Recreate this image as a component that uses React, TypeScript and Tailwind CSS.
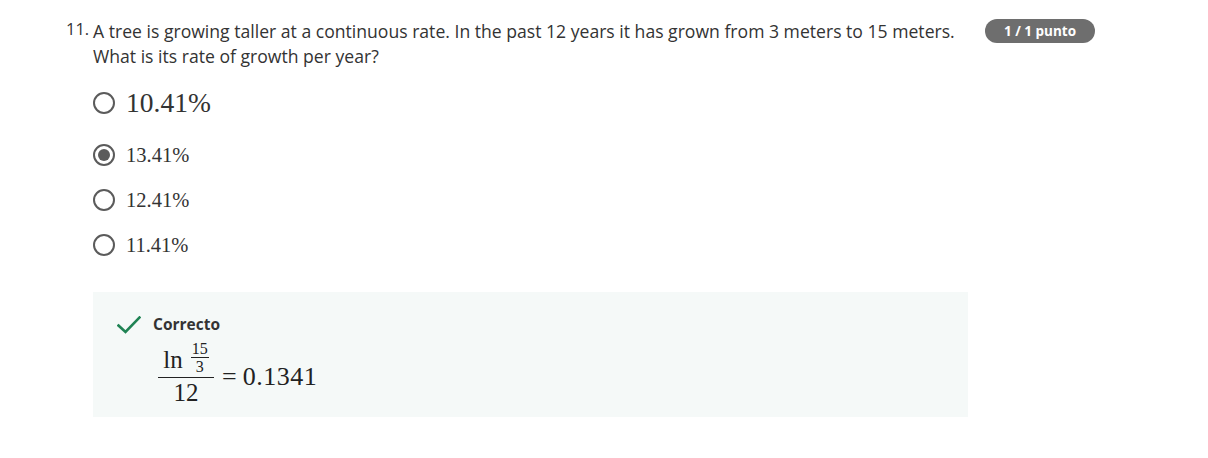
import React from "react";

const sans = { fontFamily: '"Open Sans", "Noto Sans", sans-serif' };
const serif = { fontFamily: '"Liberation Serif", "DejaVu Serif", serif' };

const options = [
  { label: "10.41%", big: true, checked: false },
  { label: "13.41%", big: false, checked: true },
  { label: "12.41%", big: false, checked: false },
  { label: "11.41%", big: false, checked: false },
];

function Radio({ checked }: { checked: boolean }) {
  return (
    <span className="flex h-[22px] w-[22px] shrink-0 items-center justify-center rounded-full border-2 border-[#5b5b5b] bg-white">
      {checked && <span className="h-[12px] w-[12px] rounded-full bg-[#5b5b5b]" />}
    </span>
  );
}

export default function App() {
  return (
    <div className="min-h-[458px] w-[1208px] bg-white text-[#333]" style={sans}>
      <div className="flex pt-[18px]">
        <div className="w-[93px] shrink-0 pl-[66px] text-[16.5px] leading-[22px] text-[#333]">11.</div>
        <div className="w-[875px] shrink-0">
          <p className="pt-[1px] text-[17.6px] leading-[25px] text-[#333]">
            A tree is growing taller at a continuous rate. In the past 12 years it has grown from 3 meters to 15 meters.
            <br />
            What is its rate of growth per year?
          </p>

          <div className="mt-[19px] flex flex-col">
            {options.map((o) => (
              <label key={o.label} className={`flex items-center gap-[11px] ${o.big ? "h-[30px] mb-[24px]" : "h-[26px] mb-[19px]"}`}>
                <Radio checked={o.checked} />
                <span className={`${o.big ? "text-[27.5px]" : "text-[20.5px]"} text-[#333]`} style={serif}>
                  {o.label}
                </span>
              </label>
            ))}
          </div>

          <div className="mt-[15px] h-[125px] w-[875px] bg-[#f5f9f8] pl-[24px] pt-[21px]">
            <div className="flex items-center gap-[12px]">
              <svg width="24" height="18" viewBox="0 0 24 18" fill="none">
                <path d="M1.5 9.5 L8.5 16 L22.5 1.5" stroke="#1f8354" strokeWidth="2.6" strokeLinecap="square" />
              </svg>
              <span className="text-[15.5px] font-bold text-[#333]">Correcto</span>
            </div>
            <div className="ml-[41px] mt-[5px] flex items-center text-[#222]" style={serif}>
              <div className="flex flex-col items-center">
                <div className="flex items-start px-[2px] pb-[3px]">
                  <span className="mt-[6px] text-[25px] leading-[26px]">ln</span>
                  <span className="ml-[8px] flex flex-col items-center text-[16px] leading-[15px]">
                    <span className="border-b border-[#222] px-[1px] pb-[1px]">15</span>
                    <span className="pt-[1px]">3</span>
                  </span>
                </div>
                <div className="h-[1px] w-[56px] bg-[#222]" />
                <span className="text-[25px] leading-[29px]">12</span>
              </div>
              <span className="ml-[8px] mt-[5px] text-[26px]">=</span>
              <span className="ml-[6px] mt-[5px] text-[26px] tracking-[0.5px]">0.1341</span>
            </div>
          </div>
        </div>
        <div className="ml-[17px] mt-[1px] flex h-[24px] w-[110px] items-center justify-center rounded-full bg-[#6e6e6e] text-[13.5px] font-bold text-white">
          1 / 1 punto
        </div>
      </div>
    </div>
  );
}
